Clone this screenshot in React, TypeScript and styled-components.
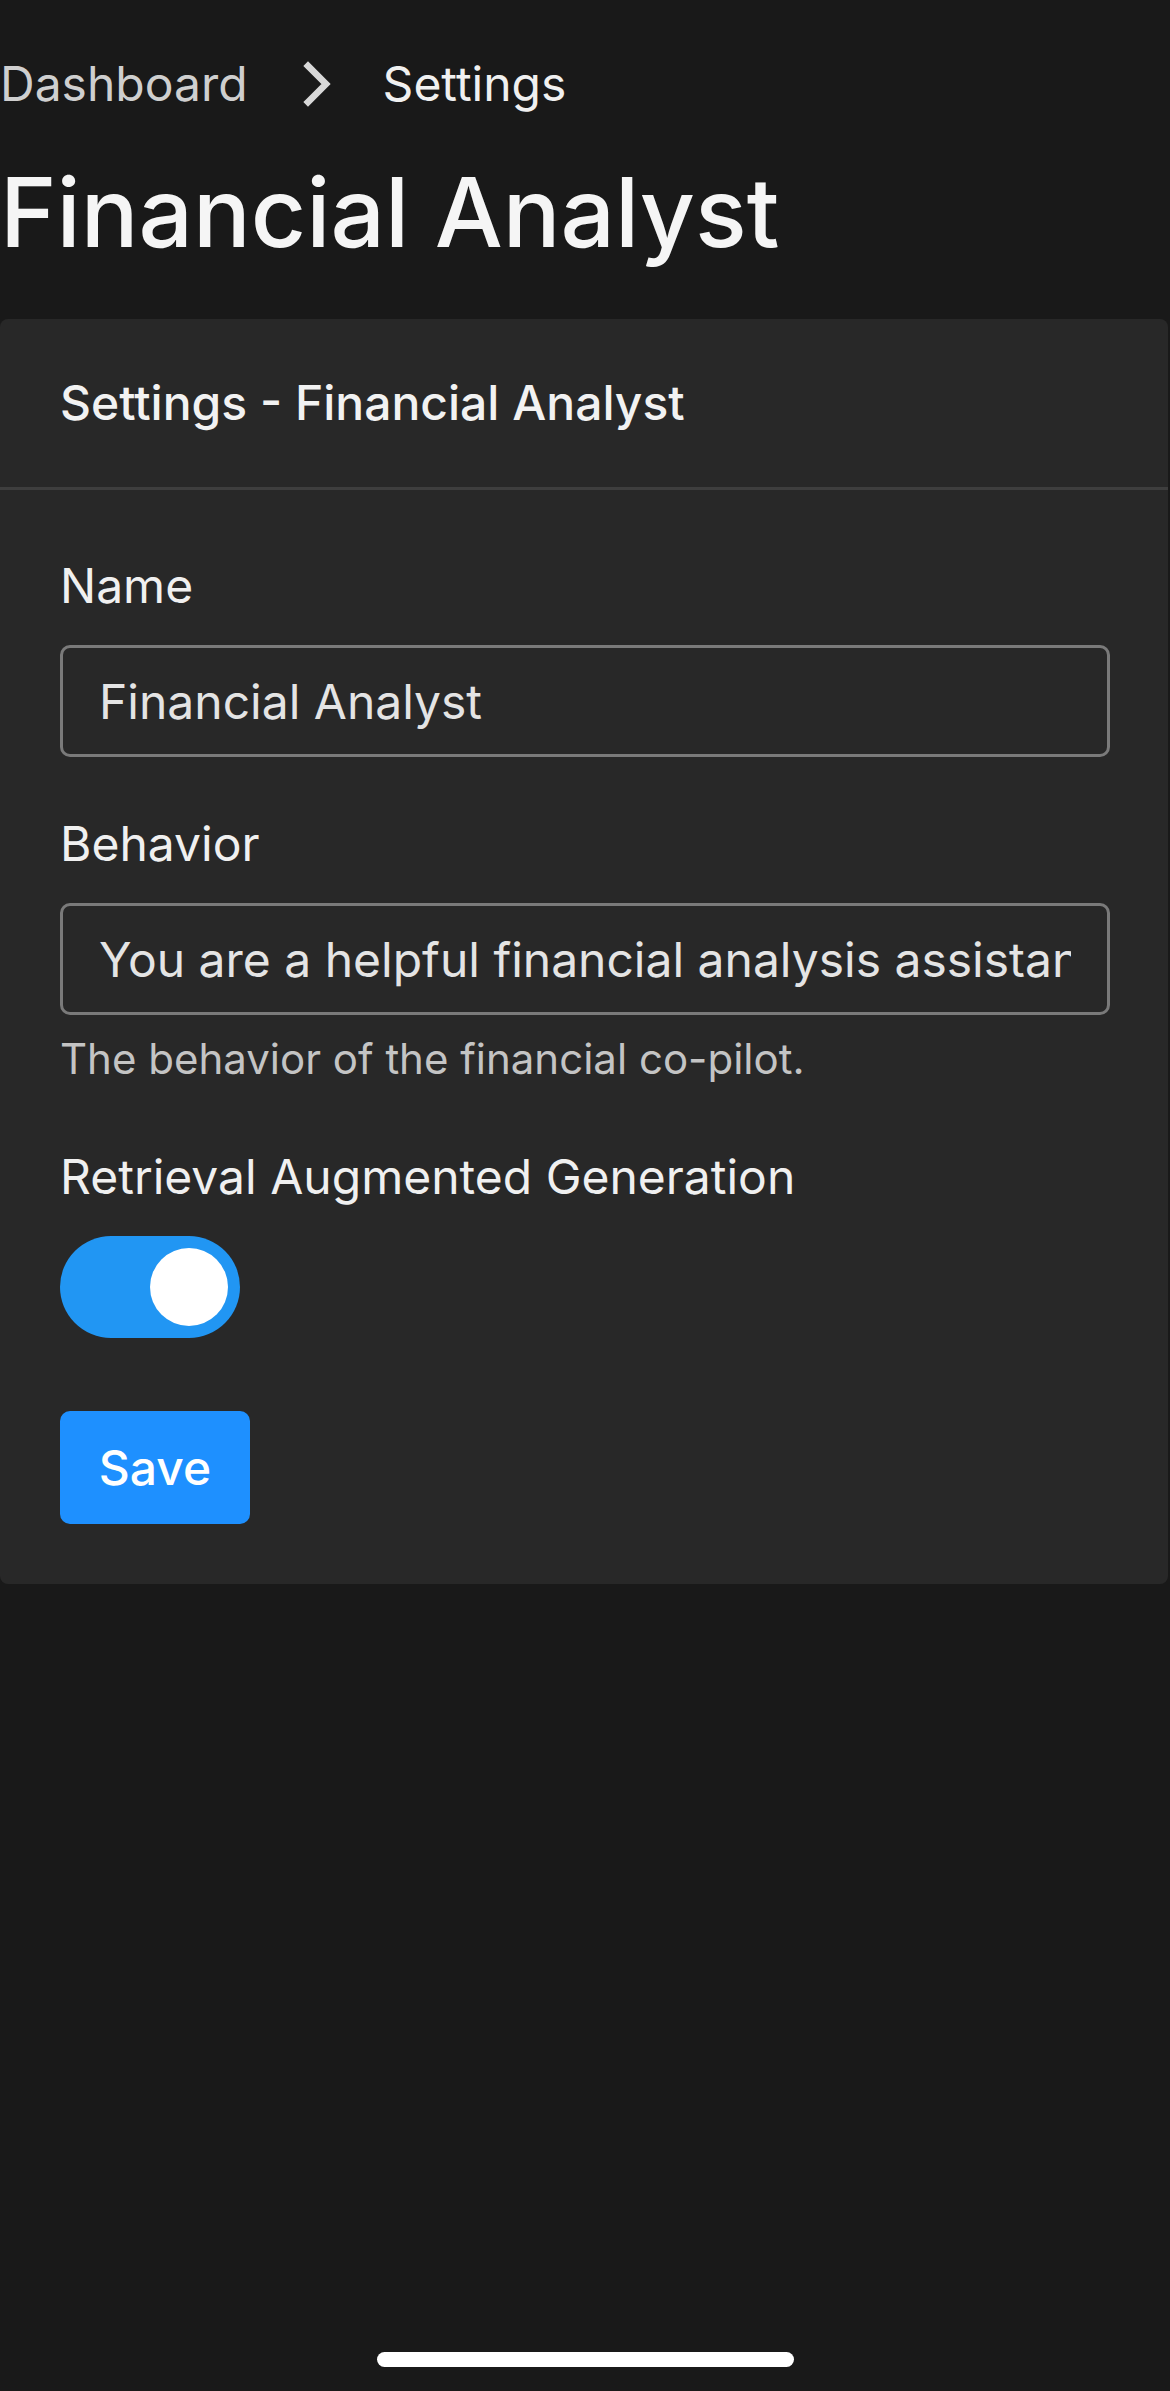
import React from "react";
import styled, { createGlobalStyle } from "styled-components";

const GlobalStyle = createGlobalStyle`
  html, body {
    margin: 0;
    padding: 0;
    background: #191919;
  }
  body {
    font-family: Inter, "Noto Sans", "Liberation Sans", sans-serif;
    color: #f2f2f2;
    -webkit-font-smoothing: antialiased;
  }
  * { box-sizing: border-box; }
`;

const Page = styled.div`
  position: relative;
  min-height: 2391px;
  padding-top: 48px;
  background: #191919;
`;

const Breadcrumb = styled.nav`
  display: flex;
  align-items: center;
  height: 72px;
  font-size: 48px;
  line-height: 72px;
`;

const Crumb = styled.span<{ $current?: boolean }>`
  color: ${(p) => (p.$current ? "#f0f0f0" : "#cfcfcf")};
`;

const Separator = styled.span`
  display: flex;
  align-items: center;
  margin: 0 30px 0 33px;
  color: #d8d8d8;
`;

const Title = styled.h1`
  margin: 32px 0 0;
  font-size: 96px;
  font-weight: 500;
  line-height: 120px;
  color: #f5f5f5;
  letter-spacing: 0;
`;

const Card = styled.section`
  margin-top: 47px;
  width: 1168px;
  background: #282828;
  border-radius: 8px;
`;

const CardHeader = styled.header`
  padding: 48px 60px;
  border-bottom: 3px solid #3e3e3e;
  font-size: 48px;
  line-height: 72px;
  font-weight: 500;
  color: #f2f2f2;
`;

const CardBody = styled.div`
  display: flex;
  flex-direction: column;
  padding: 60px 60px 60px;
`;

const Field = styled.div<{ $gap?: number }>`
  display: flex;
  flex-direction: column;
  margin-bottom: ${(p) => p.$gap ?? 51}px;
`;

const Label = styled.label`
  font-size: 48px;
  line-height: 72px;
  color: #f0f0f0;
  margin-bottom: 23px;
`;

const TextInput = styled.input`
  width: 1050px;
  height: 112px;
  padding: 0 36px;
  border: 3px solid #7a7a7a;
  border-radius: 10px;
  background: #282828;
  color: #e4e4e4;
  font-family: Inter, "Noto Sans", "Liberation Sans", sans-serif;
  font-size: 48px;
  outline: none;
`;

const Help = styled.p`
  margin: 12px 0 0;
  font-size: 42px;
  line-height: 63px;
  color: #c4c4c4;
`;

const Switch = styled.button<{ $on: boolean }>`
  display: flex;
  align-items: center;
  justify-content: ${(p) => (p.$on ? "flex-end" : "flex-start")};
  width: 180px;
  height: 102px;
  padding: 0 12px;
  border: none;
  border-radius: 51px;
  background: ${(p) => (p.$on ? "#2196f3" : "#555")};
  cursor: pointer;
`;

const Knob = styled.span`
  width: 78px;
  height: 78px;
  border-radius: 50%;
  background: #ffffff;
`;

const SaveButton = styled.button`
  align-self: flex-start;
  margin-top: 73px;
  width: 190px;
  height: 113px;
  border: none;
  border-radius: 10px;
  background: #1e90ff;
  color: #ffffff;
  font-family: Inter, "Noto Sans", "Liberation Sans", sans-serif;
  font-size: 48px;
  font-weight: 500;
  cursor: pointer;
`;

const HomeIndicator = styled.div`
  position: absolute;
  left: 377px;
  top: 2352px;
  width: 417px;
  height: 15px;
  border-radius: 8px;
  background: #ffffff;
`;

const ChevronRight = () => (
  <svg width="72" height="72" viewBox="0 0 24 24" fill="none" stroke="currentColor" strokeWidth="2.2" strokeLinecap="square" strokeLinejoin="miter">
    <path d="m9 18 6-6-6-6" />
  </svg>
);

export default function App() {
  const [rag, setRag] = React.useState(true);
  return (
    <>
      <GlobalStyle />
      <Page>
        <Breadcrumb>
          <Crumb>Dashboard</Crumb>
          <Separator>
            <ChevronRight />
          </Separator>
          <Crumb $current>Settings</Crumb>
        </Breadcrumb>
        <Title>Financial Analyst</Title>
        <Card>
          <CardHeader>Settings - Financial Analyst</CardHeader>
          <CardBody>
            <Field>
              <Label>Name</Label>
              <TextInput readOnly defaultValue="Financial Analyst" />
            </Field>
            <Field>
              <Label>Behavior</Label>
              <TextInput
                readOnly
                defaultValue="You are a helpful financial analysis assistant."
              />
              <Help>The behavior of the financial co-pilot.</Help>
            </Field>
            <Field $gap={0}>
              <Label>Retrieval Augmented Generation</Label>
              <Switch $on={rag} onClick={() => setRag(!rag)} aria-pressed={rag}>
                <Knob />
              </Switch>
            </Field>
            <SaveButton>Save</SaveButton>
          </CardBody>
        </Card>
        <HomeIndicator />
      </Page>
    </>
  );
}
